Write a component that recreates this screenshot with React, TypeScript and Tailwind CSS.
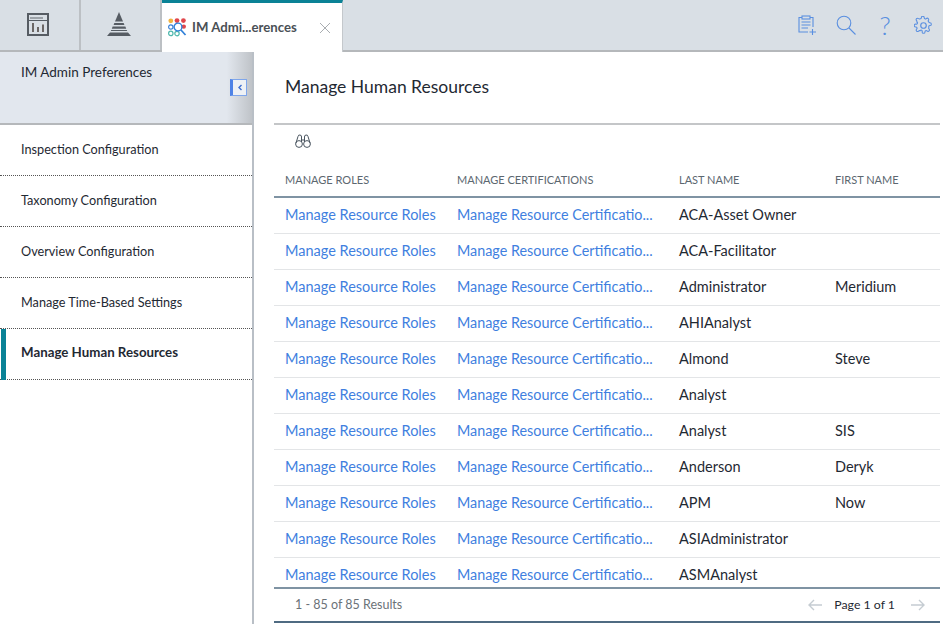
const rows: [string, string][] = [
  ["ACA-Asset Owner", ""],
  ["ACA-Facilitator", ""],
  ["Administrator", "Meridium"],
  ["AHIAnalyst", ""],
  ["Almond", "Steve"],
  ["Analyst", ""],
  ["Analyst", "SIS"],
  ["Anderson", "Deryk"],
  ["APM", "Now"],
  ["ASIAdministrator", ""],
  ["ASMAnalyst", ""],
];

const menu = [
  "Inspection Configuration",
  "Taxonomy Configuration",
  "Overview Configuration",
  "Manage Time-Based Settings",
  "Manage Human Resources",
];

function TabIcon() {
  return (
    <svg width="19" height="19" viewBox="0 0 19 19" fill="none" className="shrink-0">
      <circle cx="2.8" cy="2.8" r="2.4" fill="#f2b441" />
      <circle cx="9" cy="2.6" r="2.4" fill="#e0474c" />
      <circle cx="15.4" cy="2.6" r="2.4" fill="#e0474c" />
      <circle cx="2.8" cy="9" r="2.2" stroke="#3b82d6" strokeWidth="1.2" />
      <circle cx="15.8" cy="8.6" r="2.2" fill="#e0474c" />
      <circle cx="2.8" cy="15.4" r="2.2" stroke="#4fb8ad" strokeWidth="1.2" />
      <circle cx="9" cy="15.6" r="2.2" stroke="#4fb8ad" strokeWidth="1.2" />
      <circle cx="10" cy="9" r="3.9" fill="#fff" stroke="#2f7fd8" strokeWidth="1.4" />
      <path d="M13 12 L17.5 17" stroke="#2f7fd8" strokeWidth="1.7" />
    </svg>
  );
}

export default function App() {
  return (
    <div className="w-[943px] h-[624px] overflow-hidden bg-white flex flex-col font-['Lato','Noto_Sans',sans-serif] text-[#1f2933]">
      <div className="h-[52px] shrink-0 flex bg-[#d9dfe5] border-b-2 border-[#b5b8bb]">
        <div className="w-[81px] flex items-center justify-center pr-[4px] pb-[2px] border-r-2 border-[#bcc0c4]">
          <svg width="22" height="23" viewBox="0 0 22 23" fill="none">
            <rect x="1" y="1" width="20" height="21" stroke="#565c63" strokeWidth="2" />
            <path d="M3 5H16" stroke="#8d9298" strokeWidth="1.6" />
            <path d="M2 7.5H20" stroke="#565c63" strokeWidth="1" />
            <path d="M6 19V10M11 19V14M16 19V11.5" stroke="#5f5a58" strokeWidth="1.8" />
          </svg>
        </div>
        <div className="w-[81px] flex items-center justify-center pr-[3px] pb-[2px] border-r-2 border-[#bcc0c4]">
          <svg width="24" height="24" viewBox="0 0 24 24" fill="#565c63">
            <path d="M12 0 L16 9.5 H8 Z" />
            <path d="M7.3 11 H16.7 L17.4 13 H6.6 Z" />
            <path d="M5.6 14.5 H18.4 L19.2 16.8 H4.8 Z" />
            <path d="M4.2 18 H19.8 L20.2 19 H3.8 Z" />
            <path d="M3 20.5 H21 L24 24 H0 Z" />
          </svg>
        </div>
        <div className="w-[181px] h-[52px] bg-white border-t-[3px] border-[#0a8296] border-r border-r-[#c4c8cc] flex items-center pl-[6px] pr-[11px] gap-[5px] -mr-px">
          <TabIcon />
          <span className="text-[13.2px] font-bold text-[#4a5056] whitespace-nowrap">IM Admi...erences</span>
          <svg width="12" height="12" viewBox="0 0 12 12" stroke="#a9adb1" strokeWidth="1" className="ml-auto">
            <path d="M1 1L11 11M11 1L1 11" />
          </svg>
        </div>
        <div className="flex-1 flex items-center justify-end gap-[19px] pr-[10px]">
          <svg width="20" height="20" viewBox="0 0 20 20" fill="none" stroke="#5a8fe0" strokeWidth="1.1">
            <path d="M5 2.5H2V17H11M13 2.5H16V12" />
            <rect x="5" y="1" width="8" height="3" />
            <path d="M4.5 7H13.5M4.5 10H13.5M4.5 13H11" />
            <path d="M15.5 14V20M12.5 17H19" />
          </svg>
          <svg width="20" height="20" viewBox="0 0 20 20" fill="none" stroke="#5a8fe0" strokeWidth="1.1">
            <circle cx="8" cy="8" r="6.8" />
            <path d="M13 13L19.5 19.5" />
          </svg>
          <span className="w-[20px] text-center text-[26px] leading-none text-[#5a8fe0] font-light">?</span>
          <svg width="19" height="19" viewBox="0 0 24 24" fill="none" stroke="#5a8fe0" strokeWidth="1.5">
            <circle cx="12" cy="12" r="3.5" />
            <path d="M19.4 15a1.65 1.65 0 0 0 .33 1.82l.06.06a2 2 0 1 1-2.83 2.83l-.06-.06a1.65 1.65 0 0 0-2.82 1.17V21a2 2 0 1 1-4 0v-.09A1.65 1.65 0 0 0 7 19.4a1.65 1.65 0 0 0-1.82.33l-.06.06a2 2 0 1 1-2.83-2.83l.06-.06A1.65 1.65 0 0 0 1.17 14H1a2 2 0 1 1 0-4h.09A1.65 1.65 0 0 0 2.6 7a1.65 1.65 0 0 0-.33-1.82l-.06-.06a2 2 0 1 1 2.83-2.83l.06.06A1.65 1.65 0 0 0 7 2.6h.09A1.65 1.65 0 0 0 9 1.09V1a2 2 0 1 1 4 0v.09a1.65 1.65 0 0 0 1 1.51 1.65 1.65 0 0 0 1.82-.33l.06-.06a2 2 0 1 1 2.83 2.83l-.06.06A1.65 1.65 0 0 0 19.4 7v.09a1.65 1.65 0 0 0 1.51 1H21a2 2 0 1 1 0 4h-.09a1.65 1.65 0 0 0-1.51 1z" transform="translate(1.2 1.2) scale(0.9)" />
          </svg>
        </div>
      </div>

      <div className="flex-1 flex min-h-0">
        <div className="w-[254px] shrink-0 border-r-2 border-[#b9bfc6] flex flex-col">
          <div className="relative h-[73px] shrink-0 bg-[linear-gradient(90deg,#e2e7ee_0%,#e2e7ee_90%,#bfc3c8_100%)] border-b-2 border-[#b5b8bb] pl-[21px] pt-[11px] text-[13.5px] leading-[18px]">
            IM Admin Preferences
            <div className="absolute right-[5px] top-[27px] w-[17px] h-[17px] bg-[#eef1f5] border border-[#7fa6ea] border-l-[3px] border-l-[#4f83e6] flex items-center justify-center">
              <svg width="6" height="7" viewBox="0 0 6 7" fill="none" stroke="#3f6fd0" strokeWidth="1.4">
                <path d="M4.5 1L2 3.5L4.5 6" />
              </svg>
            </div>
          </div>
          {menu.map((m, i) => (
            <div
              key={m}
              className={`h-[51px] shrink-0 flex items-center pl-[21px] border-b border-dotted border-[#555] ${
                i === 4 ? "text-[13.3px] font-bold relative pb-[2px]" : "text-[12.7px]"
              }`}
            >
              {i === 4 && <div className="absolute left-px top-0 bottom-[-1px] w-[5px] bg-[#0a8296]" />}
              {m}
            </div>
          ))}
        </div>

        <div className="flex-1 min-w-0 flex flex-col pl-[20px] pr-[3px]">
          <div className="h-[73px] shrink-0 flex items-start pl-[11px] pt-[23px] text-[17.5px] leading-[24px] border-b-2 border-[#c4c6c8]">
            Manage Human Resources
          </div>
          <div className="h-[33px] shrink-0 flex items-center pl-[21px]">
            <svg width="16" height="15" viewBox="0 0 16 15" fill="none" stroke="#4a5560" strokeWidth="1">
              <circle cx="4" cy="10" r="3.4" />
              <circle cx="12" cy="10" r="3.4" />
              <path d="M1 9L3 2.5A1.5 1.5 0 0 1 6.5 3V8M15 9L13 2.5A1.5 1.5 0 0 0 9.5 3V8M6.5 6H9.5" />
            </svg>
          </div>
          <div className="h-[40px] shrink-0 grid grid-cols-[172px_222px_156px_1fr] items-center pl-[11px] pt-[6px] text-[11px] text-[#5c6770] border-b-2 border-[#7f93a3] uppercase">
            <span>Manage Roles</span>
            <span>Manage Certifications</span>
            <span>Last Name</span>
            <span>First Name</span>
          </div>
          <div className="h-[389px] shrink-0 overflow-hidden">
            {rows.map(([last, first], i) => (
              <div
                key={i}
                className="h-[36px] grid grid-cols-[172px_222px_156px_1fr] items-center pl-[11px] pb-[1px] text-[14.5px] border-b border-[#e3e5e7] whitespace-nowrap"
              >
                <span className="text-[#3f7fe0]">Manage Resource Roles</span>
                <span className="text-[#3f7fe0] text-[14.35px]">Manage Resource Certificatio...</span>
                <span>{last}</span>
                <span>{first}</span>
              </div>
            ))}
          </div>
          <div className="h-[36px] shrink-0 flex items-center justify-between pl-[21px] pr-[15px] text-[12.5px] border-t-2 border-b-2 border-t-[#7f93a3] border-b-[#4f6b82]">
            <span className="text-[#6b7278]">1 - 85 of 85 Results</span>
            <div className="flex items-center">
              <svg width="14" height="12" viewBox="0 0 14 12" fill="none" stroke="#c5ccd2" strokeWidth="1.4" className="mr-[12px]">
                <path d="M14 6H1M6 1L1 6L6 11" />
              </svg>
              <span className="text-[12.3px]">Page 1 of 1</span>
              <svg width="14" height="12" viewBox="0 0 14 12" fill="none" stroke="#c5ccd2" strokeWidth="1.4" className="ml-[16px]">
                <path d="M0 6H13M8 1L13 6L8 11" />
              </svg>
            </div>
          </div>
        </div>
      </div>
    </div>
  );
}
